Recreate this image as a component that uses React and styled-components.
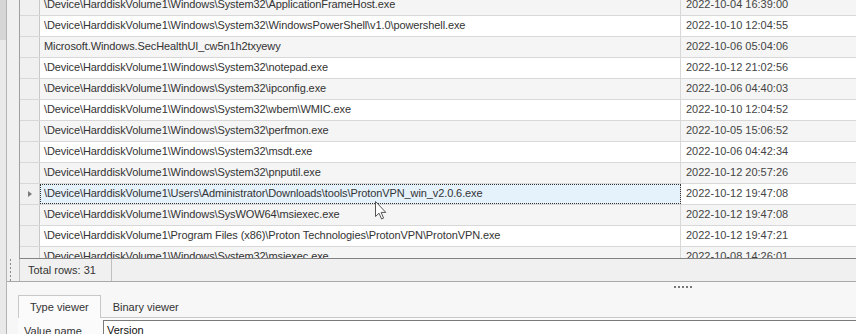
import React from 'react'
import styled, { createGlobalStyle, css } from 'styled-components';

const GlobalStyle = createGlobalStyle`
    html, body {
        margin: 0;
        padding: 0;
        background: #f0f0f0;
        overflow: hidden;
    }
    body {
        font-family: "Liberation Sans", Arial, sans-serif;
        font-size: 11px;
        color: #333;
    }
`;

const P = '\\Device\\HarddiskVolume1\\';
const rows = [
    [P + 'Windows\\System32\\ApplicationFrameHost.exe', '2022-10-04 16:39:00'],
    [P + 'Windows\\System32\\WindowsPowerShell\\v1.0\\powershell.exe', '2022-10-10 12:04:55'],
    ['Microsoft.Windows.SecHealthUI_cw5n1h2txyewy', '2022-10-06 05:04:06'],
    [P + 'Windows\\System32\\notepad.exe', '2022-10-12 21:02:56'],
    [P + 'Windows\\System32\\ipconfig.exe', '2022-10-06 04:40:03'],
    [P + 'Windows\\System32\\wbem\\WMIC.exe', '2022-10-10 12:04:52'],
    [P + 'Windows\\System32\\perfmon.exe', '2022-10-05 15:06:52'],
    [P + 'Windows\\System32\\msdt.exe', '2022-10-06 04:42:34'],
    [P + 'Windows\\System32\\pnputil.exe', '2022-10-12 20:57:26'],
    [P + 'Users\\Administrator\\Downloads\\tools\\ProtonVPN_win_v2.0.6.exe', '2022-10-12 19:47:08'],
    [P + 'Windows\\SysWOW64\\msiexec.exe', '2022-10-12 19:47:08'],
    [P + 'Program Files (x86)\\Proton Technologies\\ProtonVPN\\ProtonVPN.exe', '2022-10-12 19:47:21'],
    [P + 'Windows\\System32\\msiexec.exe', '2022-10-08 14:26:01'],
];
const SELECTED = 9;

const App = () => {
    return (
        <Window>
            <GlobalStyle />
            <LeftStrip>
                <StripThumb />
            </LeftStrip>
            <Main>
                <GridArea>
                    <Grid>
                        <GridBody>
                            {rows.map((r, i) => (
                                <Row key={i} odd={i % 2 === 1}>
                                    <Indicator>{i === SELECTED && <Arrow />}</Indicator>
                                    <PathCell selected={i === SELECTED}>{r[0]}</PathCell>
                                    <DateCell>{r[1]}</DateCell>
                                </Row>
                            ))}
                        </GridBody>
                        <Cursor viewBox="0 0 12 19" width="12" height="19">
                            <path d="M0.5 0.5 L0.5 15.5 L4 12.2 L6.6 18 L8.6 17.1 L6.1 11.4 L10.8 11.4 Z" fill="#fff" stroke="#555" strokeWidth="1" strokeLinejoin="round" />
                        </Cursor>
                    </Grid>
                </GridArea>
                <StatusBar>
                    <Grip />
                    <StatusPanel>Total rows: 31</StatusPanel>
                </StatusBar>
                <Splitter>
                    <SplitDots />
                </Splitter>
                <BottomPanel>
                    <TabStrip>
                        <Tab active>Type viewer</Tab>
                        <Tab>Binary viewer</Tab>
                    </TabStrip>
                    <TabPage>
                        <FieldLabel>Value name</FieldLabel>
                        <TextBox>Version</TextBox>
                    </TabPage>
                </BottomPanel>
            </Main>
        </Window>
    )
}

const Window = styled.div`
    display: flex;
    width: 856px;
    height: 334px;
    overflow: hidden;
    background: #f0f0f0;
`;
const LeftStrip = styled.div`
    width: 6px;
    flex-shrink: 0;
    background: #e9e9e9;
    border-right: 1px solid #b4b4b4;
`;
const StripThumb = styled.div`
    height: 40px;
    background: #d6d6d6;
`;
const Main = styled.div`
    flex: 1;
    display: flex;
    flex-direction: column;
    min-width: 0;
    height: 334px;
    overflow: hidden;
`;
const GridArea = styled.div`
    flex-shrink: 0;
    height: 259px;
    padding-left: 12px;
    background: #f0f0f0;
`;
const Grid = styled.div`
    position: relative;
    height: 258px;
    border-left: 1px solid #a0a0a0;
    border-bottom: 1px solid #828282;
    overflow: hidden;
    background: #fff;
`;
const GridBody = styled.div`
    margin-top: -5px;
`;
const Row = styled.div`
    display: flex;
    height: 20px;
    border-bottom: 1px solid #d8d8d8;
    background: ${p => p.odd ? '#ffffff' : '#f5f5f5'};
`;
const Indicator = styled.div`
    width: 19px;
    flex-shrink: 0;
    background: #f0f0f0;
    border-right: 1px solid #c8c8c8;
    display: flex;
    align-items: center;
    justify-content: center;
`;
const Arrow = styled.div`
    width: 0;
    height: 0;
    border-top: 3px solid transparent;
    border-bottom: 3px solid transparent;
    border-left: 4px solid #7a7a7a;
    margin-left: 1px;
`;
const PathCell = styled.div`
    width: 641px;
    flex-shrink: 0;
    box-sizing: border-box;
    padding-left: 4px;
    line-height: 18px;
    letter-spacing: -0.1px;
    white-space: nowrap;
    overflow: hidden;
    border-right: 1px solid #d8d8d8;
    ${p => p.selected && css`
        background: #e5f1fb;
        outline: 1px dotted #333;
        outline-offset: -1px;
    `}
`;
const DateCell = styled.div`
    flex: 1;
    padding-left: 5px;
    line-height: 18px;
    white-space: nowrap;
    color: #444;
`;
const Cursor = styled.svg`
    position: absolute;
    left: 355px;
    top: 201px;
`;
const StatusBar = styled.div`
    flex-shrink: 0;
    height: 22px;
    display: flex;
    border-bottom: 1px solid #a8a8a8;
    background: #f0f0f0;
`;
const Grip = styled.div`
    width: 12px;
    flex-shrink: 0;
    background-image: radial-gradient(circle, #8a8a8a 0.9px, transparent 1.1px);
    background-size: 3px 4px;
    background-repeat: repeat-y;
    background-position: 2px 3px;
`;
const StatusPanel = styled.div`
    width: 83px;
    padding-left: 8px;
    line-height: 22px;
    color: #333;
    border-left: 1px solid #c0c0c0;
    border-right: 1px solid #c0c0c0;
`;
const Splitter = styled.div`
    flex-shrink: 0;
    height: 13px;
    display: flex;
    padding-left: 667px;
    background: #f7f7f7;
`;
const SplitDots = styled.div`
    width: 20px;
    height: 2px;
    margin-top: 4px;
    background-image: linear-gradient(90deg, #777 2px, transparent 2px);
    background-size: 4px 2px;
`;
const BottomPanel = styled.div`
    flex: 1;
    min-height: 0;
    background: #f7f7f7;
    padding-left: 11px;
    display: flex;
    flex-direction: column;
`;
const TabStrip = styled.div`
    flex-shrink: 0;
    display: flex;
    height: 22px;
    border-bottom: 1px solid #c8c8c8;
`;
const Tab = styled.div`
    padding: 0 12px 0 11px;
    line-height: 22px;
    color: #333;
    border: 1px solid transparent;
    border-bottom: none;
    margin-bottom: -1px;
    ${p => p.active && css`
        background: #fbfbfb;
        border-color: #c8c8c8;
        padding-bottom: 1px;
        padding-right: 11px;
    `}
`;
const TabPage = styled.div`
    flex: 1;
    flex-shrink: 0;
    display: flex;
    align-items: flex-start;
    padding-top: 2px;
    background: #fbfbfb;
`;
const FieldLabel = styled.div`
    width: 80px;
    padding-left: 6px;
    padding-top: 5px;
`;
const TextBox = styled.div`
    flex: 1;
    height: 20px;
    margin-left: -1px;
    border: 1px solid #7a7a7a;
    border-right: none;
    border-bottom: none;
    padding: 3px 3px;
    background: #fff;
    color: #111;
`;

export default App;
